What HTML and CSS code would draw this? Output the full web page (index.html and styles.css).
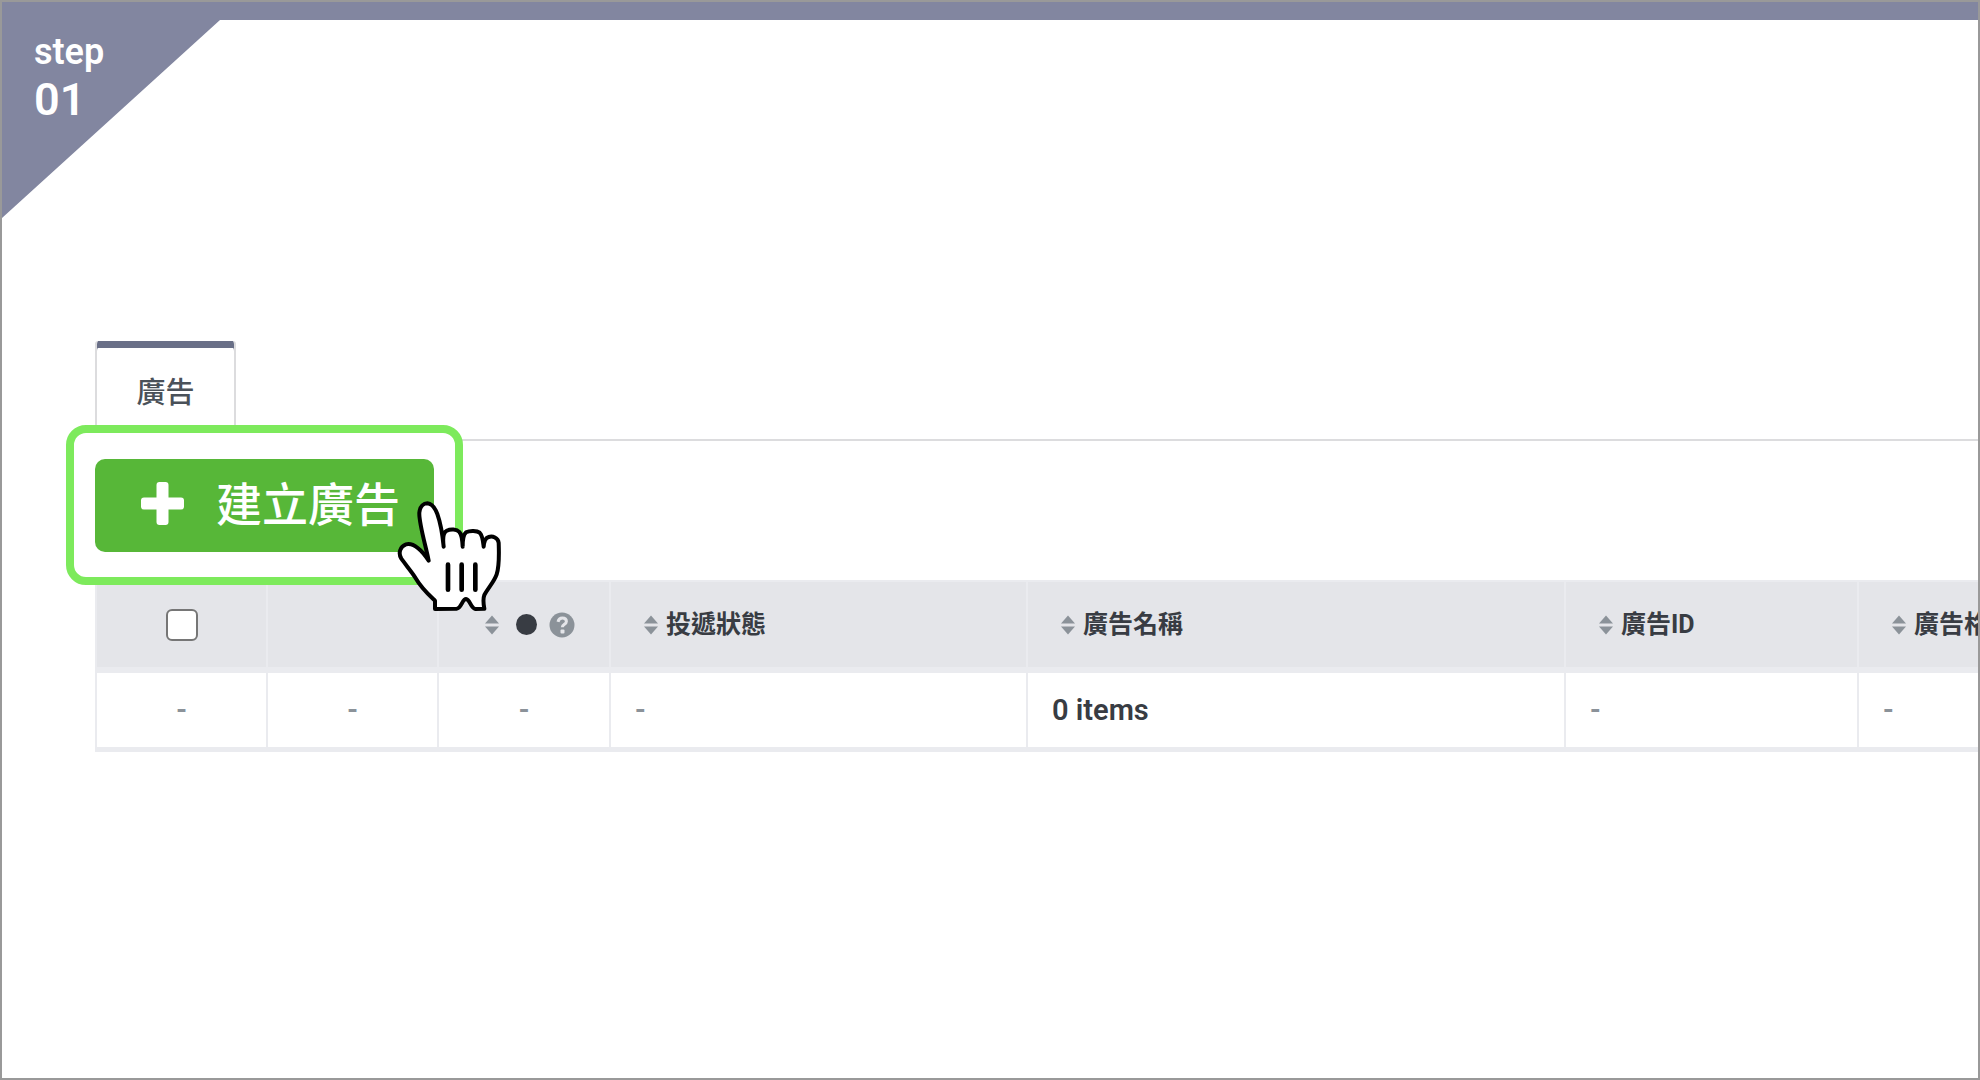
FILE: index.html
```html
<!DOCTYPE html>
<html lang="zh-Hant">
  <head>
    <meta charset="UTF-8" />
    <meta name="viewport" content="width=device-width, initial-scale=1.0" />
    <title>建立廣告</title>
    <link rel="stylesheet" href="styles.css">
  </head>
  <body>
    <svg class="sprite" aria-hidden="true">
      <symbol id="sort" viewBox="0 0 14 20">
        <path d="M7 0.5 14 8.5H0zM7 19.5 0 11.5h14z" />
      </symbol>
    </svg>

    <div class="frame">
      <header class="step">
        <p class="step-label">step</p>
        <p class="step-number">01</p>
      </header>

      <main>
        <nav class="tabs">
          <a class="tab" href="#ads" aria-current="page">廣告</a>
        </nav>

        <div class="toolbar">
          <div class="create">
            <span class="highlight"></span>
            <button type="button">
              <svg class="plus" viewBox="0 0 43 43" aria-hidden="true">
                <path d="M18.500 0h6q3 0 3 3v12.500H40q3 0 3 3v6q0 3-3 3H27.500V40q0 3-3 3h-6q-3 0-3-3V27.500H3q-3 0-3-3v-6q0-3 3-3h12.500V3q0-3 3-3z" />
              </svg>
              建立廣告
            </button>
            <svg class="hand" viewBox="50 60 318 336" aria-hidden="true">
              <path class="palm" d="M148 242 C140 200 118 128 120 98 C122 78 134 70 144 70 C158 71 168 86 174 102 C184 130 190 168 193 200 C190 176 190 158 202 152 C214 146 232 147 240 156 C248 164 249 180 250 200 C250 182 251 164 260 157 C272 151 293 152 301 158 C310 166 311 182 313 200 C314 186 316 174 328 171 C340 167 356 173 358 188 C359 220 361 256 352 283 C344 306 326 324 315 345 C310 358 312 370 315 386 L288 387 C274 385 272 358 260 357 C249 357 246 385 232 386 L167 387 L167 362 C146 342 126 324 110 296 C98 276 80 256 66 236 C56 220 62 199 80 193 C104 187 128 212 148 242 Z" />
              <path class="lines" d="M206 254V329M247 254V329M288 254V329" />
            </svg>
          </div>
        </div>

        <div class="table-wrap" id="ads">
          <table>
            <colgroup>
              <col class="col-check" />
              <col class="col-action" />
              <col class="col-light" />
              <col class="col-status" />
              <col class="col-name" />
              <col class="col-id" />
              <col class="col-format" />
            </colgroup>
            <thead>
              <tr>
                <th class="center">
                  <input type="checkbox" aria-label="全選" />
                </th>
                <th></th>
                <th class="light">
                  <div class="head">
                    <svg class="sort"><use href="#sort" /></svg>
                    <span class="dot"></span>
                    <svg class="help" viewBox="0 0 26 26" aria-hidden="true">
                      <circle cx="13" cy="13" r="12.500" />
                      <path d="M9 9.800C9.600 7.200 11.200 6 13.300 6C15.800 6 17.400 7.500 17.400 9.500C17.400 12.200 13.300 12.200 13.300 15.200" />
                      <rect x="11.500" y="17.500" width="4" height="4" rx="1" />
                    </svg>
                  </div>
                </th>
                <th>
                  <div class="head">
                    <svg class="sort"><use href="#sort" /></svg>
                    投遞狀態
                  </div>
                </th>
                <th>
                  <div class="head">
                    <svg class="sort"><use href="#sort" /></svg>
                    廣告名稱
                  </div>
                </th>
                <th>
                  <div class="head">
                    <svg class="sort"><use href="#sort" /></svg>
                    廣告ID
                  </div>
                </th>
                <th>
                  <div class="head">
                    <svg class="sort"><use href="#sort" /></svg>
                    廣告格式
                  </div>
                </th>
              </tr>
            </thead>
            <tbody>
              <tr>
                <td class="center">-</td>
                <td class="center">-</td>
                <td class="center">-</td>
                <td>-</td>
                <td class="total">0 items</td>
                <td>-</td>
                <td>-</td>
              </tr>
            </tbody>
          </table>
        </div>
      </main>
    </div>
  </body>
</html>
```

FILE: styles.css
```css
/* Global styles */
* {
  margin: 0;
  padding: 0;
  box-sizing: border-box;
}
body {
  color: #383c43;
  font: 500 25px/36px Roboto, "Noto Sans CJK TC", sans-serif;
  background-color: #fff;
}
button {
  border: none;
  font: inherit;
  color: inherit;
  background: none;
}
.sprite {
  position: absolute;
  width: 0;
  height: 0;
}

.frame {
  min-height: 100vh;
  overflow: hidden;
  border: 2px solid #999;
}

/* Step corner */
.step {
  height: 216px;
  padding: 28px 32px;
  color: #fff;
  font-weight: 600;
  background-color: #8286a0;
  clip-path: polygon(0 0, 100% 0, 100% 18px, 218px 18px, 0 100%);
}
.step-label {
  font-size: 36px;
  line-height: 44px;
}
.step-number {
  font-size: 45px;
  line-height: 52px;
}

main {
  padding: 123px 0 60px 93px;
}

/* Tabs */
.tabs {
  display: flex;
  border-bottom: 2px solid #dcdcde;
}
.tab {
  width: 141px;
  padding: 34px 0 28px;
  color: #4a5159;
  font-size: 29px;
  text-align: center;
  text-decoration: none;
  border: solid #dcdcde;
  border-width: 0 2px;
  border-radius: 3px;
  box-shadow: inset 0 7px #696f87;
}

/* Toolbar */
.toolbar {
  display: flex;
  padding: 18px 0 28px;
}
.create {
  position: relative;
}
.create button {
  position: relative;
  display: flex;
  gap: 32px;
  align-items: center;
  padding: 12px 34px 13px 46px;
  color: #fff;
  font-size: 46px;
  line-height: 68px;
  cursor: pointer;
  border-radius: 10px;
  background-color: #57b738;
}
.plus {
  width: 43px;
  height: 43px;
  margin-bottom: 4px;
  fill: currentColor;
}
.highlight {
  position: absolute;
  inset: -34px -29px -33px;
  border: 8px solid #7dea5c;
  border-radius: 20px;
  background-color: #fff;
}
.hand {
  position: absolute;
  right: -68px;
  bottom: -60px;
  width: 106px;
  height: 112px;
  pointer-events: none;
}
.hand path {
  stroke: #000;
  stroke-linejoin: round;
  stroke-linecap: round;
}
.palm {
  fill: #fff;
  stroke-width: 12;
}
.lines {
  fill: none;
  stroke-width: 14;
}

/* Table */
.table-wrap {
  overflow: hidden;
}
table {
  width: 2057px;
  table-layout: fixed;
  border-spacing: 0;
  border-left: 2px solid #eaebef;
}
.col-check,
.col-action {
  width: 171px;
}
.col-light {
  width: 172px;
}
.col-status {
  width: 417px;
}
.col-name {
  width: 538px;
}
.col-id,
.col-format {
  width: 293px;
}
th,
td {
  border: solid #eaebef;
  text-align: left;
}
th {
  height: 93px;
  padding: 0 33px;
  font-weight: 700;
  border-width: 2px 2px 6px 0;
  background-color: #e4e5e9;
}
td {
  height: 79px;
  padding: 0 24px;
  color: #8b9299;
  font-size: 29px;
  font-weight: 600;
  border-width: 0 2px 5px 0;
}
.center {
  padding: 0;
  text-align: center;
}
.light {
  padding: 0 0 0 46px;
}
.total {
  color: #383c43;
}
.head {
  display: flex;
  gap: 8px;
  align-items: center;
  white-space: nowrap;
}
.light .head {
  gap: 12px;
}
.sort {
  width: 14px;
  height: 20px;
  fill: #8b9299;
}
.dot {
  width: 21px;
  height: 21px;
  margin-left: 5px;
  border-radius: 50%;
  background-color: #383c43;
}
.help {
  width: 26px;
  height: 26px;
  fill: #8b9299;
}
.help path {
  fill: none;
  stroke: #e4e5e9;
  stroke-width: 3;
}
.help rect {
  fill: #e4e5e9;
}
input[type="checkbox"] {
  display: block;
  appearance: none;
  width: 32px;
  height: 32px;
  margin: 0 auto;
  border: 2px solid #767676;
  border-radius: 6px;
  background-color: #fff;
}
input[type="checkbox"]:checked {
  background-color: #57b738;
}
```
